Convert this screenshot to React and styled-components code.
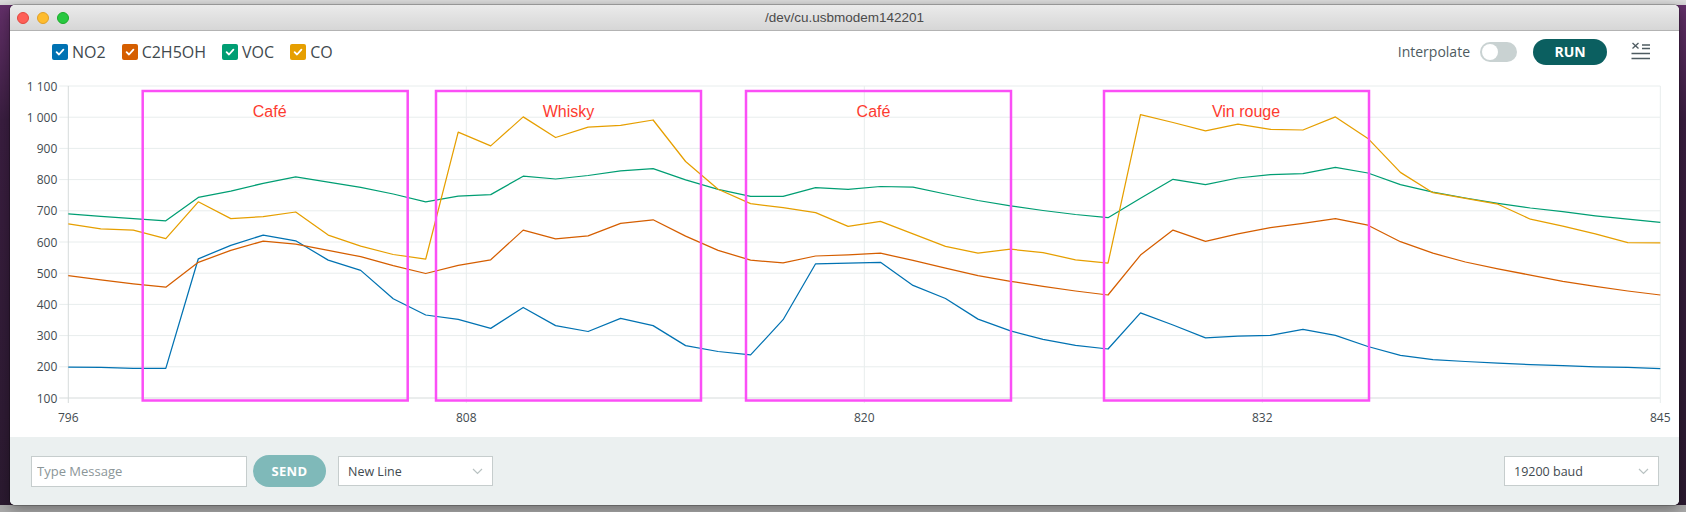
import React from 'react';
import styled, { createGlobalStyle } from 'styled-components';

const GlobalStyle = createGlobalStyle`
  html, body {
    margin: 0;
    padding: 0;
  }
  body {
    font-family: "Open Sans", "Noto Sans", sans-serif;
    background: #2b1a30;
  }
`;

// readings, one per sample (796 .. 845)
const SERIES = [
    {
        name: 'NO2',
        color: '#0072B2',
        data: [199, 198, 195, 195, 546, 589, 622, 604, 542, 509, 418, 366, 352, 323, 390, 332, 313, 355, 332, 268,
            249, 238, 351, 530, 532, 535, 461, 419, 353, 315, 288, 269, 257, 373, 334, 293, 298, 301, 320, 301,
            265, 237, 223, 217, 212, 207, 204, 200, 198, 194],
    },
    {
        name: 'C2H5OH',
        color: '#D55E00',
        data: [492, 479, 466, 455, 535, 573, 603, 593, 573, 553, 524, 499, 525, 543, 638, 610, 620, 660, 671, 619,
            573, 542, 533, 555, 559, 564, 541, 516, 492, 474, 458, 443, 430, 558, 638, 602, 626, 646, 660, 675,
            654, 601, 564, 536, 514, 494, 474, 458, 443, 430],
    },
    {
        name: 'VOC',
        color: '#009E73',
        data: [690, 682, 675, 668, 743, 763, 788, 809, 792, 775, 754, 729, 747, 752, 811, 802, 813, 828, 835, 799,
            769, 746, 746, 774, 769, 778, 776, 754, 733, 716, 701, 688, 678, 740, 801, 784, 805, 816, 819, 839,
            821, 784, 760, 741, 724, 709, 697, 684, 673, 663],
    },
    {
        name: 'CO',
        color: '#E69F00',
        data: [658, 642, 638, 611, 729, 675, 681, 696, 622, 587, 560, 545, 952, 908, 1001, 935, 968, 974, 991, 858,
            769, 723, 710, 694, 650, 666, 626, 586, 564, 577, 566, 543, 532, 1008, 983, 956, 978, 961, 959, 1001,
            932, 823, 758, 740, 721, 673, 651, 626, 598, 597],
    },
];

const ZONES = [
    { label: 'Café', x: 132.7, labelX: 259.7 },
    { label: 'Whisky', x: 426, labelX: 558.5 },
    { label: 'Café', x: 736, labelX: 863.5 },
    { label: 'Vin rouge', x: 1094, labelX: 1236 },
];

const CHART_W = 1669;
const CHART_H = 365;
const X0 = 58.3;
const STEP = 32.49;
const X1 = X0 + 49 * STEP;
const Y_TOP = 14;
const PER_UNIT = 0.312;

const xAt = (i) => X0 + i * STEP;
const yAt = (v) => Y_TOP + (1100 - v) * PER_UNIT;

const Y_TICKS = [1100, 1000, 900, 800, 700, 600, 500, 400, 300, 200, 100];
const X_TICKS = ['796', '808', '820', '832', '845'];

const fmt = (v) => (v >= 1000 ? `${Math.floor(v / 1000)} ${String(v % 1000).padStart(3, '0')}` : String(v));

const Check = ({ color }) => (
    <CheckBox $color={color}>
        <svg width="10" height="10" viewBox="0 0 10 10">
            <polyline points="1.6,5.2 4,7.5 8.4,2.6" fill="none" stroke="#fff" strokeWidth="1.8" strokeLinecap="round" strokeLinejoin="round" />
        </svg>
    </CheckBox>
);

const Chevron = () => (
    <svg width="11" height="7" viewBox="0 0 11 7">
        <polyline points="1,1 5.5,5.5 10,1" fill="none" stroke="#b9c2c2" strokeWidth="1.2" />
    </svg>
);

const ClearIcon = () => (
    <svg width="20" height="18" viewBox="0 0 20 18">
        <g stroke="#4e5b61" strokeWidth="1.3" fill="none">
            <line x1="1.5" y1="1" x2="7.5" y2="6.5" />
            <line x1="7.5" y1="1" x2="1.5" y2="6.5" />
            <line x1="11" y1="3" x2="19" y2="3" />
            <line x1="11" y1="6.5" x2="19" y2="6.5" />
            <line x1="0.5" y1="11.5" x2="19" y2="11.5" />
            <line x1="0.5" y1="16.5" x2="19" y2="16.5" />
        </g>
    </svg>
);

const Plot = () => (
    <ChartSvg width={CHART_W} height={CHART_H} viewBox={`0 0 ${CHART_W} ${CHART_H}`}>
        {/* grid */}
        {Y_TICKS.map((v) => (
            <g key={v}>
                <line x1={X0 - 9} x2={X1} y1={yAt(v)} y2={yAt(v)} stroke={v === 100 ? '#d6dbdb' : '#e8eded'} strokeWidth="1" />
                <AxisText x={X0 - 11} y={yAt(v)} textAnchor="end" dominantBaseline="central">{fmt(v)}</AxisText>
            </g>
        ))}
        {X_TICKS.map((label, k) => {
            const x = X0 + (k * (X1 - X0)) / 4;
            return (
                <g key={label}>
                    <line x1={x} x2={x} y1={Y_TOP} y2={yAt(100) + 5} stroke={k === 0 ? '#d6dbdb' : '#e8eded'} strokeWidth="1" />
                    <AxisText x={x} y={yAt(100) + 19} textAnchor="middle" dominantBaseline="central">{label}</AxisText>
                </g>
            );
        })}

        {/* series */}
        {SERIES.map((s) => (
            <polyline
                key={s.name}
                points={s.data.map((v, i) => `${xAt(i).toFixed(1)},${yAt(v).toFixed(1)}`).join(' ')}
                fill="none"
                stroke={s.color}
                strokeWidth="1.25"
                strokeLinejoin="round"
            />
        ))}

        {/* annotations */}
        {ZONES.map((z, i) => (
            <g key={i}>
                <rect x={z.x} y={19} width={265} height={309.5} fill="none" stroke="#fb4ff6" strokeWidth="2.5" />
                <ZoneText x={z.labelX} y={39} textAnchor="middle" dominantBaseline="central">{z.label}</ZoneText>
            </g>
        ))}
    </ChartSvg>
);

const App = () => {
    return (
        <>
            <GlobalStyle />
            <Desktop>
                <Window>
                    <TitleBar>
                        <Lights>
                            <Light $color="#fe5f57" $edge="#e2463f" />
                            <Light $color="#febc2e" $edge="#e0a027" />
                            <Light $color="#28c840" $edge="#1aab29" />
                        </Lights>
                        <Title>/dev/cu.usbmodem142201</Title>
                        <span />
                    </TitleBar>

                    <Toolbar>
                        <Legend>
                            {SERIES.map((s) => (
                                <LegendItem key={s.name}>
                                    <Check color={s.color} />
                                    <LegendLabel>{s.name}</LegendLabel>
                                </LegendItem>
                            ))}
                        </Legend>
                        <Controls>
                            <ControlLabel>Interpolate</ControlLabel>
                            <Toggle>
                                <Knob />
                            </Toggle>
                            <RunButton>RUN</RunButton>
                            <IconButton>
                                <ClearIcon />
                            </IconButton>
                        </Controls>
                    </Toolbar>

                    <Plot />

                    <BottomBar>
                        <MessageInput placeholder="Type Message" />
                        <SendButton>SEND</SendButton>
                        <Select>
                            <span>New Line</span>
                            <Chevron />
                        </Select>
                        <Spacer />
                        <Select>
                            <span>19200 baud</span>
                            <Chevron />
                        </Select>
                    </BottomBar>
                </Window>
            </Desktop>
        </>
    );
};

export default App;

const Desktop = styled.div`
    width: 1686px;
    height: 512px;
    box-sizing: border-box;
    padding: 5px 7px 7px 10px;
    overflow: hidden;
    background:
        linear-gradient(to bottom, #dcdcdc 0, #d2d2d2 5px, transparent 5px),
        linear-gradient(to bottom, transparent 505px, #a9a9a9 505px),
        linear-gradient(to bottom, #64306a 0, #3a1e40 120px, #2b1a30 100%);
`;

const Window = styled.div`
    width: 1669px;
    height: 500px;
    display: flex;
    flex-direction: column;
    background: #fff;
    border-radius: 5px;
    overflow: hidden;
    box-shadow: 0 0 0 1px rgba(0, 0, 0, 0.22), 0 4px 14px rgba(0, 0, 0, 0.35);
`;

const TitleBar = styled.div`
    height: 25px;
    flex: none;
    display: grid;
    grid-template-columns: 1fr auto 1fr;
    align-items: center;
    background: linear-gradient(to bottom, #ebebeb, #d6d6d6);
    border-bottom: 1px solid #b3b3b3;
`;

const Lights = styled.div`
    display: flex;
    gap: 8px;
    padding-left: 7px;
`;

const Light = styled.span`
    width: 12px;
    height: 12px;
    box-sizing: border-box;
    border-radius: 50%;
    background: ${(p) => p.$color};
    border: 0.5px solid ${(p) => p.$edge};
`;

const Title = styled.div`
    font-family: "Liberation Sans", Arial, sans-serif;
    font-size: 13.5px;
    color: #4b4b4b;
`;

const Toolbar = styled.div`
    height: 41px;
    flex: none;
    display: flex;
    align-items: center;
    justify-content: space-between;
    padding: 0 28px 0 42px;
`;

const Legend = styled.div`
    display: flex;
    align-items: center;
    gap: 16px;
`;

const LegendItem = styled.label`
    display: flex;
    align-items: center;
    gap: 4px;
`;

const CheckBox = styled.span`
    width: 16px;
    height: 16px;
    border-radius: 2px;
    background: ${(p) => p.$color};
    display: flex;
    align-items: center;
    justify-content: center;
`;

const LegendLabel = styled.span`
    font-size: 16px;
    color: #3f494e;
    line-height: 1;
`;

const Controls = styled.div`
    display: flex;
    align-items: center;
`;

const ControlLabel = styled.span`
    font-size: 14px;
    color: #4e5b61;
    margin-right: 10px;
`;

const Toggle = styled.span`
    width: 37px;
    height: 20px;
    box-sizing: border-box;
    padding: 2px;
    border-radius: 10px;
    background: #c9d2d2;
    display: flex;
    align-items: center;
    margin-right: 16px;
`;

const Knob = styled.span`
    width: 16px;
    height: 16px;
    border-radius: 50%;
    background: #fff;
`;

const RunButton = styled.button`
    width: 74px;
    height: 26px;
    border: none;
    border-radius: 13px;
    background: #0b5f60;
    color: #fff;
    font-family: "Open Sans", sans-serif;
    font-weight: 700;
    font-size: 14px;
    padding: 0;
    margin-right: 24px;
`;

const IconButton = styled.span`
    display: flex;
    width: 20px;
    height: 18px;
    margin-top: -2px;
`;

const ChartSvg = styled.svg`
    display: block;
    flex: none;
`;

const AxisText = styled.text`
    font-family: "Open Sans", sans-serif;
    font-size: 12px;
    fill: #434b50;
`;

const ZoneText = styled.text`
    font-family: "Liberation Sans", Arial, sans-serif;
    font-size: 16px;
    fill: #fd3b30;
`;

const BottomBar = styled.div`
    flex: 1;
    display: flex;
    align-items: center;
    background: #ebf0f0;
    padding: 0 20px 0 21px;
`;

const MessageInput = styled.input`
    width: 216px;
    height: 31px;
    box-sizing: border-box;
    border: 1px solid #c6cdcd;
    background: #fff;
    padding: 0 5px;
    font-family: "Open Sans", sans-serif;
    font-size: 13px;
    color: #4e5b61;
    outline: none;
    margin-right: 6px;
    &::placeholder {
        color: #8b9698;
    }
`;

const SendButton = styled.button`
    width: 73px;
    height: 32px;
    border: none;
    border-radius: 16px;
    background: #7fb9b9;
    color: #fff;
    font-family: "Open Sans", sans-serif;
    font-weight: 700;
    font-size: 13px;
    letter-spacing: 0.4px;
    padding: 0;
    margin-right: 12px;
`;

const Select = styled.div`
    width: 155px;
    height: 30px;
    box-sizing: border-box;
    border: 1px solid #c6cdcd;
    background: #fff;
    display: flex;
    align-items: center;
    justify-content: space-between;
    padding: 0 9px;
    font-size: 12.5px;
    color: #3f4a4f;
`;

const Spacer = styled.div`
    flex: 1;
`;
